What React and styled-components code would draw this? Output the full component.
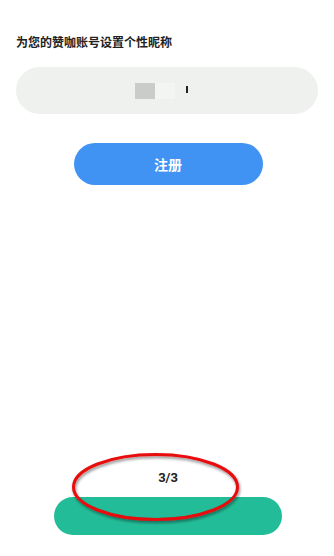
import React from 'react'
import styled, { createGlobalStyle } from 'styled-components'

const Global = createGlobalStyle`
  html, body { margin: 0; padding: 0; background: #fff; }
  body { font-family: "Noto Sans CJK SC", "Noto Sans", sans-serif; }
`

const Page = styled.div`
  position: relative;
  height: 556px;
  display: flex;
  flex-direction: column;
  padding: 33px 16px 21px;
  box-sizing: border-box;
`

const Title = styled.div`
  font-size: 12px;
  font-weight: 700;
  color: #222;
  line-height: 18px;
`

const NameField = styled.div`
  margin-top: 16px;
  height: 47px;
  border-radius: 24px;
  background: #eef1ee;
  display: flex;
  align-items: center;
  justify-content: center;
  padding-right: 11px;
`

// mosaic blocks over the blurred nickname
const Mosaic = styled.span`
  display: block;
  width: 20px;
  height: 16px;
  background: ${p => p.light ? '#f3f5f3' : '#c9ccc9'};
`

const Cursor = styled.span`
  display: block;
  width: 2px;
  height: 7px;
  margin-left: 11px;
  margin-top: -3px;
  background: #222;
`

const Register = styled.button`
  align-self: center;
  margin-top: 29px;
  margin-left: 2px;
  width: 189px;
  height: 42px;
  border: 0;
  border-radius: 21px;
  background: #4193f3;
  color: #fff;
  font-family: inherit;
  font-size: 14px;
  font-weight: 700;
`

const Footer = styled.div`
  margin-top: auto;
  display: flex;
  flex-direction: column;
  align-items: center;
`

const Step = styled.div`
  font-family: Roboto, "Noto Sans", sans-serif;
  font-size: 13px;
  font-weight: 700;
  color: #222;
  line-height: 16px;
  margin-left: 2px;
`

const NextButton = styled.div`
  margin-top: 11px;
  margin-left: 2px;
  width: 228px;
  height: 38px;
  border-radius: 19px;
  background: #22bd98;
`

const Mark = styled.svg`
  position: absolute;
  left: 0;
  top: 0;
  pointer-events: none;
`

export default function App() {
  return (
    <>
      <Global />
      <Page>
        <Title>为您的赞咖账号设置个性昵称</Title>
        <NameField>
          <Mosaic />
          <Mosaic light />
          <Cursor />
        </NameField>
        <Register>注册</Register>
        <Footer>
          <Step>3/3</Step>
          <NextButton />
        </Footer>
        <Mark width="334" height="556">
          <defs>
            <filter id="sh" x="-20%" y="-40%" width="140%" height="180%">
              <feDropShadow dx="1" dy="2" stdDeviation="1.5" floodColor="#000" floodOpacity="0.45" />
            </filter>
          </defs>
          <ellipse cx="155.5" cy="487" rx="82" ry="32.5" fill="none" stroke="#e8080b" strokeWidth="3" filter="url(#sh)" />
        </Mark>
      </Page>
    </>
  )
}
